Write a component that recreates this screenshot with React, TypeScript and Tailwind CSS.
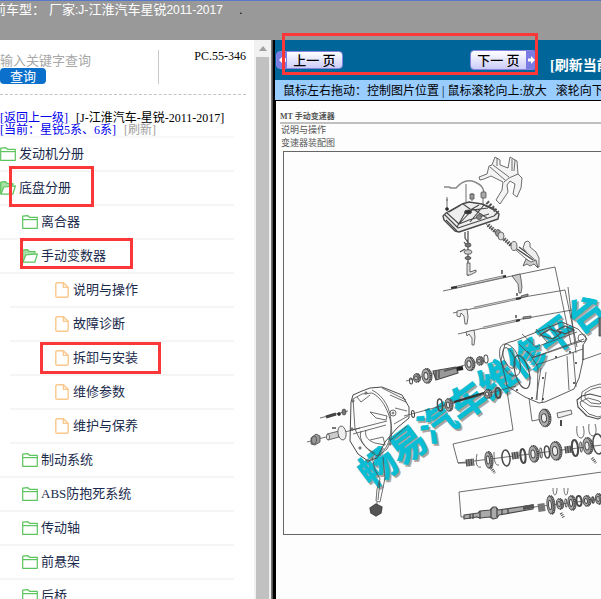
import React from 'react';

type IconKind = 'folder' | 'open' | 'page';

type Node = {
  label: string;
  icon: IconKind;
  mark?: string;
  children?: Node[];
};

const tree: Node[] = [
  { label: '发动机分册', icon: 'folder' },
  {
    label: '底盘分册',
    icon: 'open',
    mark: 'left-[9px] w-[85px] -top-[6px] h-[41px]',
    children: [
      { label: '离合器', icon: 'folder' },
      {
        label: '手动变数器',
        icon: 'open',
        mark: 'left-5 w-[113px] -top-[2px] h-[31px]',
        children: [
          { label: '说明与操作', icon: 'page' },
          { label: '故障诊断', icon: 'page' },
          { label: '拆卸与安装', icon: 'page', mark: 'left-[30px] w-[121px] top-0 h-8' },
          { label: '维修参数', icon: 'page' },
          { label: '维护与保养', icon: 'page' },
        ],
      },
      { label: '制动系统', icon: 'folder' },
      { label: 'ABS防抱死系统', icon: 'folder' },
      { label: '传动轴', icon: 'folder' },
      { label: '前悬架', icon: 'folder' },
      { label: '后桥', icon: 'folder' },
    ],
  },
];

function TreeIcon({ kind }: { kind: IconKind }) {
  if (kind === 'page') {
    return (
      <svg width="14" height="16" viewBox="0 0 14 16" fill="none" stroke="#fbc88c" strokeWidth="1.4" className="mr-1 shrink-0">
        <path d="M2 .8h6.4L13.2 5.400V14a1.200 1.200 0 0 1-1.200 1.200H2A1.200 1.200 0 0 1 .8 14V2A1.200 1.200 0 0 1 2 .8z" />
        <path d="M8.400 1v4.400h4.600" />
      </svg>
    );
  }
  if (kind === 'open') {
    return (
      <svg width="16" height="14" viewBox="0 0 16 14" fill="none" stroke="#5cc45c" strokeWidth="1.2" strokeLinejoin="round" className="mr-[3px] shrink-0">
        <path d="M.7 13V1.200L5.500.7 7.200 2.500H13v2.300" fill="#a5e0a5" />
        <path d="M.9 13.200L3.800 6l11.600-1.200-2.600 8.400z" fill="#fff" />
      </svg>
    );
  }
  return (
    <svg width="16" height="14" viewBox="0 0 16 14" fill="none" stroke="#5cc45c" strokeWidth="1.2" strokeLinejoin="round" className="mr-[3px] shrink-0">
      <path d="M.7 1.200L5.800.7l1.700 1.600h7.800v11H.7z" />
      <path d="M.7 4.600h14.600" />
    </svg>
  );
}

function Branch({ nodes, level }: { nodes: Node[]; level: number }) {
  const indent = level === 0 ? '' : level === 1 ? 'pl-[22px]' : 'pl-[45px]';
  return (
    <ul className={level === 2 ? 'ml-[10px]' : ''}>
      {nodes.map((n) => (
        <li key={n.label}>
          <div className="relative border-b-2 border-[#f5f5f5]">
            <a href="#" className={`flex h-8 items-center text-[13px] text-[#1b2b4d] ${indent}`}>
              <TreeIcon kind={n.icon} />
              {n.label}
            </a>
            {n.mark && <span className={`pointer-events-none absolute z-10 border-[3px] border-[#fb3737] ${n.mark}`} />}
          </div>
          {n.children && <Branch nodes={n.children} level={level + 1} />}
        </li>
      ))}
    </ul>
  );
}

function Gear({ x, y, rx, ry, teeth = true }: { x: number; y: number; rx: number; ry: number; teeth?: boolean }) {
  return (
    <g transform={`rotate(-6 ${x} ${y})`}>
      <ellipse cx={x + 2} cy={y} rx={rx} ry={ry} fill="#bbb" />
      {teeth && <ellipse cx={x + 1} cy={y} rx={rx} ry={ry} stroke="#444" strokeWidth="2" strokeDasharray="1 .8" />}
      <ellipse cx={x} cy={y} rx={rx} ry={ry} fill="#aaa" />
      <ellipse cx={x} cy={y} rx={rx * 0.5} ry={ry * 0.5} fill="#eee" strokeWidth="1" />
    </g>
  );
}

function Ring({ x, y, rx, ry, w = 1 }: { x: number; y: number; rx: number; ry: number; w?: number }) {
  return <ellipse cx={x} cy={y} rx={rx} ry={ry} strokeWidth={w} transform={`rotate(-6 ${x} ${y})`} />;
}

function GearboxDrawing() {
  return (
    <svg width="318" height="382" viewBox="284 152 318 382" className="block max-w-none" role="img" aria-label="变速器装配图">
      <g fontFamily="'Noto Sans CJK SC', sans-serif" fontWeight="700" fontSize="37">
        <text x="373" y="491" fill="#a9a39d" stroke="#a9a39d" strokeWidth=".6" transform="rotate(-36.500 373 491)">畅易汽车维修平台</text>
        <text x="371" y="489" fill="#08bdd4" stroke="#08bdd4" strokeWidth=".6" transform="rotate(-36.500 371 489)">畅易汽车维修平台</text>
      </g>
      <g fill="none" stroke="#4a4a4a" strokeWidth=".8" strokeLinejoin="round">
        {/* shift bracket */}
        <path d="M495 157l5 3v5l8 3 2-11 7 4 1 13 4 4-1 10-4 9-4-3 2-10-5-3-3 4 1 7-8 12-4-4 6-10 1-8-12-6-7 3-4 1-1-3 8-3 2-8 3-1z" fill="#f4f4f4" />
        <path d="M490 167l15 13M493 165l16 12M497 158v8M512 159v12M518 174l-9 4-5 4M515 160l-1 11" />
        {/* breather pipe */}
        <path d="M444 187h5l2 1h5c5-6 12-9 19-6 6 3 8 5 9 10" stroke="#888" strokeWidth="1.500" />
        <path d="M466 184v18M447 197v12M446 200h2M472 193v8M483 192v12" />
        <rect x="470" y="194" width="4" height="5" fill="#999" />
        <rect x="481" y="192" width="5" height="6" rx="1" fill="#aaa" />
        <circle cx="447" cy="209" r="1.500" fill="#222" />
        {/* top cover */}
        <path d="M443 216l3-3 16-9 7-2 13 2 12 5 5 5-1 5-39 13-4-1-11-11z" fill="#eee" strokeWidth="1.400" />
        <path d="M445 215l13 13 36-12 4-4M447 213l12 11 10-4 20-6M463 204l7 5 9 1M457 227l8-14 14-8M449 212l12-7M470 222l14-17M473 209l14 9M459 224l13-14 16-2M446 220l11 11M484 205l10 5" strokeWidth="1.100" />
        <ellipse cx="468" cy="212" rx="3.500" ry="2" fill="#333" />
        <ellipse cx="479" cy="217" rx="2.500" ry="2.500" fill="#888" />
        <path d="M487 202l11 11" strokeWidth="4" strokeDasharray="2 1.500" stroke="#555" />
        {/* selector parts below cover */}
        <path d="M465 232v6l4 6-2 2-3-4M468 231v45M460 252l5-3" strokeWidth="1.200" />
        <ellipse cx="468" cy="245" rx="3" ry="2" fill="#777" />
        <ellipse cx="468" cy="252" rx="4" ry="2.300" fill="#ccc" />
        <ellipse cx="468" cy="258" rx="3" ry="1.500" fill="#777" />
        <path d="M467 263v12h3l6-3v-2l-6 2v-9z" fill="#ddd" />
        {/* lock pin stack */}
        <path d="M486 224l46 40" />
        <path d="M488 225l8 7M504 239l7 6" stroke="#555" strokeWidth="4" strokeDasharray="1.500 1" />
        <ellipse cx="498" cy="233" rx="2.500" ry="3.500" fill="#999" />
        <ellipse cx="501" cy="236" rx="3" ry="4" fill="#ddd" />
        <ellipse cx="514" cy="246" rx="3" ry="4.500" fill="#ddd" />
        <path d="M517 249l16 11M519 247l15 11" strokeWidth="1.400" />
        <path d="M524 245l1-3 3-1 2 2v4l6 5 3 6v9l-3-1-2-7-7-6-4-5z" fill="#eee" />
        <path d="M523 266l3-7 5 3 5-2 2 8-4-4-4 2-3-2z" fill="#ccc" />
        {/* selector rails */}
        <path d="M443 291l78-17 34-7 16 77M453 313l71-16 41-7 12 57M458 334l64-15 50-9M568 287l8 66" />
        <path d="M452 288l54-12M474 308l46-10M483 328l36-8" stroke="#777" strokeWidth="2.400" />
        <path d="M452 288l54-12M474 308l46-10M483 328l36-8" stroke="#ddd" strokeWidth=".8" />
        <path d="M451 288l6-1M503 277l3-1M516 299l5-1M516 321l4-1" stroke="#333" strokeWidth="2" />
        <path d="M502 270v4M517 293v3M516 315v3" stroke="#333" strokeWidth="1.300" />
        <path d="M512 276l8-2 1 5 1 8-1 6h-2l-1-9-3-4z" fill="#ccc" />
        <path d="M457 311l10-2 1 8-1 7h-2l-1-8-3-3-1 4-3-1z" fill="#eee" />
        <path d="M466 332l8-2 1 7-1 8h-2v-7l-3-4-2 2z" fill="#eee" />
        <path d="M521 298l7-2v-2l-7 2zM523 319l8-1v-2l-8 1z" fill="#999" />
        {/* input shaft */}
        <path d="M406 381l74-20" />
        <Ring x={411} y={381} rx={1.5} ry={3} />
        <Gear x={416} y={378} rx={2.5} ry={4} />
        <Gear x={426} y={376} rx={4} ry={7} />
        <path d="M433 371l3 9 22-7-2-6z" fill="#999" strokeWidth="1.200" />
        <path d="M436 370v10M439 370v8M444 371l12-3" stroke="#555" strokeWidth="1.500" />
        <path d="M457 369l6-1" strokeWidth="4" stroke="#222" />
        <Gear x={469} y={364} rx={4} ry={6.5} />
        <Gear x={479} y={361} rx={2.5} ry={4} />
        <Ring x={486} y={359} rx={2} ry={4} />
        {/* gearbox case */}
        <path d="M514 341l48-19 16 7 9 10-4 6v15l-4 18-5 11-29 13-6 1-14-6-18-11-6-26 4-16 5-2z" strokeWidth=".9" />
        <path d="M527 351l7 6 50-18M532 358l50-17M536 365l47-16M519 344l12 12 7 11-1 33M546 372l-4 30M541 368l-5 32M583 345v15M522 334l14 13 41-15M536 329l11 13M548 325l12 13M573 352l3 35M567 356l2 34" strokeWidth=".8" />
        <ellipse cx="510" cy="360" rx="9" ry="17" transform="rotate(-22 510 360)" />
        <ellipse cx="522" cy="372" rx="7" ry="17" transform="rotate(-15 522 372)" strokeWidth="1.100" />
        <ellipse cx="509" cy="358" rx="5" ry="11" transform="rotate(-22 509 358)" />
        <ellipse cx="582" cy="338" rx="4" ry="4" />
        <path d="M540 335l10-6 11 4-8 6zM557 330l8-4 9 4-9 4z" strokeWidth="1.100" />
        <g fill="#333" stroke="none">
          <circle cx="517" cy="390" r="1" /><circle cx="532" cy="398" r="1" /><circle cx="543" cy="378" r="1" />
          <circle cx="543" cy="399" r="1" /><circle cx="576" cy="363" r="1" /><circle cx="574" cy="383" r="1" />
          <circle cx="556" cy="357" r="1" /><circle cx="570" cy="352" r="1" />
        </g>
        {/* layshaft */}
        <path d="M404 416l112-30" />
        <path d="M454 402l33-10" stroke="#333" strokeWidth="2" />
        <Ring x={413} y={414} rx={1.5} ry={3.5} />
        <Ring x={440} y={405} rx={2.5} ry={6} w={1.5} />
        <Gear x={448} y={405} rx={3} ry={6} />
        <Gear x={487} y={394} rx={3} ry={4} />
        <Ring x={498} y={393} rx={2.5} ry={5} w={2} />
        {/* clutch housing */}
        <path d="M351 402l2-7 9-4 8-3 12-1 20 8 7 12v11l-12 10-12 14-8 16-9 3-10-7-8-13z" strokeWidth="1" />
        <path d="M353 399l9-5 10-1c9 4 15 15 18 26s2 21-3 30l-9 7c-9-3-18-14-23-27z" />
        <path d="M357 397l4 5 4-3 5-4M372 390c12 6 19 19 19 34 0 12-2 20-7 26M382 388l24 12M390 395l16 7M395 408l12 3M391 440l16-14M394 424l14-8" strokeWidth=".8" />
        <path d="M361 431c-3 8 4 18 14 22M366 430c-2 7 3 11 9 13l10 2-2-8-13 3" />
        <path d="M370 412l17 4-1 4-10-2zM352 430l35-9M353 434l33-9" />
        <circle cx="393" cy="413" r="3" /><circle cx="393" cy="413" r="1" />
        <g fill="#999" strokeWidth=".6">
          <circle cx="353" cy="401" r="1.200" /><circle cx="366" cy="393" r="1.200" /><circle cx="352" cy="429" r="1.200" />
          <circle cx="360" cy="448" r="1.200" /><circle cx="368" cy="461" r="1.200" /><circle cx="390" cy="444" r="1.200" />
        </g>
        {/* release shaft and bolt */}
        <path d="M307 442l53-14M320 418l28-7" />
        <path d="M326 417l10-3" strokeWidth="3" stroke="#444" />
        <circle cx="339" cy="414" r="1.500" fill="#222" />
        <ellipse cx="344" cy="412" rx="2" ry="3" fill="#777" />
        <path d="M311 438l5-4 4 2v6l-5 3-4-1z" fill="#999" />
        <ellipse cx="314" cy="440" rx="2.500" ry="4" />
        <path d="M327 434l12-3v6l-11 3z" fill="#ccc" />
        <ellipse cx="328" cy="437" rx="1.500" ry="3" fill="#eee" />
        <ellipse cx="342" cy="433" rx="4" ry="7" fill="#eee" transform="rotate(-10 342 433)" />
        <path d="M332 428h4" strokeWidth="1.500" />
        {/* release fork */}
        <path d="M372 457l3 13 5 9-3 10-1 12 4 1 3-14 2-10-2-21" />
        <path d="M380 481l-2 19M377 502v6" />
        <path d="M370 508l6-4 6 3-1 6-5 3-5-3z" fill="#555" strokeWidth="1.300" />
        {/* leader lines */}
        <path d="M507 391l6 39-60 14 5 19h8M529 398l3 23 10-2M602 472l-143 20 2 25h6M582 360l20-7" />
        {/* reverse idler */}
        <Gear x={544} y={418} rx={5} ry={8.5} />
        <path d="M557 413l14-3 1 4-14 4z" fill="#eee" />
        <path d="M561 420v6" strokeWidth="2" />
        {/* gaskets */}
        <path d="M582 392l8-5 10-3 8 3v12l-6 8-12-1-9-6z" />
        <path d="M585 393l7-4 8-2 5 3v8l-5 6-9-1-6-5z" />
        <path d="M577 400l5-4 8-2 12 3 4 5v13l-8 4-11-3-9-9z" strokeWidth="1.100" />
        <path d="M580 402l8-4 11 3 5 5v9l-6 2-9-3-8-8z" />
        <path d="M599 318h4v18h-4z" fill="#777" />
        {/* main shaft gears */}
        <path d="M458 463l144-18" />
        <path d="M466 463l8-1M512 456l7-1M565 450l7-1" stroke="#888" strokeWidth="7" />
        <path d="M466 463l8-1M512 456l7-1M565 450l7-1" stroke="#444" strokeWidth="7" strokeDasharray="1 1.500" />
        <path d="M477 454c-2 10 0 14 4 13M494 452c0 8 1 14 5 13M577 426c-1 8 1 12 4 12s4-6 2-12M589 424c-1 8 1 12 4 12s4-6 2-12" />
        <Gear x={488} y={460} rx={3} ry={8} />
        <Ring x={506} y={458} rx={4} ry={8} w={1.5} />
        <Ring x={523} y={456} rx={2.5} ry={7} w={2} />
        <Gear x={533} y={454} rx={4} ry={8} />
        <Ring x={541} y={453} rx={1} ry={5} />
        <Ring x={547} y={452} rx={2.5} ry={6} w={1.5} />
        <Gear x={555} y={451} rx={5} ry={9} />
        <Ring x={575} y={448} rx={3} ry={8} w={2} />
        <Ring x={581} y={447} rx={1} ry={5} />
        <Gear x={587} y={446} rx={4} ry={8} />
        <Ring x={598} y={444} rx={5} ry={10} w={1.5} />
        <path d="M491 468l4 5M592 458l4 5M561 513l3 5" strokeWidth="3" strokeDasharray="1 1" />
        {/* output shaft */}
        <path d="M464 515l14-2 2-2 10-1 3-3h3l2 3 35-5v4l-34 6-2 3-4 1-3-2-10 1-3-1-13 2z" fill="#aaa" strokeWidth="1.200" />
        <path d="M470 514v5M473 514v5M480 511v8M491 509v9M497 508v9M502 509v6M508 509v5" strokeWidth="1.300" />
        <path d="M523 508l11-2" strokeWidth="4" stroke="#555" />
        <path d="M534 507l68-8" />
        <path d="M538 508l7-1" stroke="#777" strokeWidth="8" />
        <Gear x={550} y={505} rx={3} ry={9} />
        <Gear x={559} y={504} rx={2.5} ry={5} />
        <Ring x={566} y={503} rx={1} ry={4} />
        <Gear x={571} y={503} rx={3} ry={7} />
        <Ring x={579} y={501} rx={2.5} ry={5} w={2} />
        <Gear x={586} y={501} rx={3} ry={5} />
        <Ring x={593} y={500} rx={1} ry={3} w={1.5} />
        <Gear x={598} y={499} rx={2.5} ry={5} />
        <path d="M553 488c0 5 1 7 2 7s2-3 2-7M564 488c0 5 1 7 2 7s2-3 2-7" />
      </g>
    </svg>
  );
}

function Sidebar() {
  return (
    <aside className="w-[254px] shrink-0 overflow-hidden bg-white pt-[10px]">
      <div className="mr-2 flex items-start justify-between border-b border-dashed border-[#c4c4c4] pb-[10px]">
        <form className="flex w-[159px] flex-col items-start border-r border-[#c8c8c8]">
          <input
            type="text"
            aria-label="关键字"
            placeholder="输入关键字查询"
            className="h-[18px] w-full pt-1 text-[13px] leading-none outline-none placeholder:text-[#a8a8a8]"
          />
          <button type="button" className="flex h-4 w-[46px] items-center justify-center rounded bg-[#0a70cc] text-[13px] leading-none text-white">
            查询
          </button>
        </form>
        <span className="text-xs leading-3 text-black">PC.55-346</span>
      </div>
      <nav className="mr-5 border-b-2 border-[#f7f7f7] pt-[17px] text-xs leading-3 whitespace-nowrap">
        <div className="flex gap-2 text-black">
          <a href="#" className="text-[#0000ee]">[返回上一级]</a>
          <span>[J-江淮汽车-星锐-2011-2017]</span>
        </div>
        <div className="flex gap-2">
          <a href="#" className="text-[#0000ee]">[当前：星锐5系、6系]</a>
          <a href="#" className="text-[#a0a0a0]">[刷新]</a>
        </div>
      </nav>
      <div className="mr-5">
        <Branch nodes={tree} level={0} />
      </div>
    </aside>
  );
}

function Viewer() {
  return (
    <main className="flex min-w-0 flex-1 flex-col">
      <div className="relative flex h-10 shrink-0 items-center bg-[#006699] pl-px whitespace-nowrap">
        <button type="button" className="flex h-[18px] w-[67px] shrink-0 items-center rounded-sm border border-[#8585e0] bg-linear-to-b from-white to-[#ccccf8] text-[13px] leading-none font-medium text-black">
          <span className="flex h-full w-[10px] items-center justify-center bg-[#7b7be4]">
            <svg width="7" height="8" viewBox="0 0 7 8" fill="#fff"><path d="M0 4l4-4 3 2.500v3L4 8z" /></svg>
          </span>
          <span className="flex-1">上一 页</span>
        </button>
        <button type="button" className="ml-[127px] flex h-5 w-[67px] shrink-0 items-center rounded-sm border border-[#8585e0] bg-linear-to-b from-white to-[#ccccf8] text-[13px] leading-none font-medium text-black">
          <span className="flex-1">下一 页</span>
          <span className="flex h-full w-[10px] items-center justify-center bg-[#7b7be4]">
            <svg width="7" height="8" viewBox="0 0 7 8" fill="#fff"><path d="M7 4L3 0v2.500H0v3h3V8z" /></svg>
          </span>
        </button>
        <a href="#" className="mt-3 ml-[13px] text-sm leading-none font-bold text-white">[刷新当前页]</a>
        <span className="pointer-events-none absolute -top-[7px] left-[7px] z-10 h-[42px] w-64 border-[3px] border-[#fb3737]" />
      </div>
      <p className="flex h-5 shrink-0 items-center overflow-hidden bg-[#99ccff] pt-px pl-2 text-xs whitespace-pre text-black">
        鼠标左右拖动：控制图片位置 | 鼠标滚轮向上:放大{'   '}滚轮向下:缩小
      </p>
      <div className="flex-1 overflow-hidden border-t border-l border-black bg-[#fdfdfd] pt-[10px] pl-1 whitespace-nowrap text-[#555]">
        <h1 className="border-b-2 border-[#c0c0c0] text-[8px] leading-[11px] font-bold">MT 手动变速器</h1>
        <p className="pl-px text-[9px] leading-[13px]">说明与操作</p>
        <p className="pl-px text-[9px] leading-[13px]">变速器装配图</p>
        <div className="mt-px ml-[3px] overflow-hidden border-y border-l border-[#666]">
          <GearboxDrawing />
        </div>
      </div>
    </main>
  );
}

export default function App() {
  return (
    <div className="flex h-screen flex-col overflow-hidden bg-white font-['Liberation_Serif','Noto_Sans_CJK_SC',serif]">
      <header className="h-10 shrink-0 overflow-hidden border-t border-[#5577cc] bg-[#999999] pt-px font-['Liberation_Sans','Noto_Sans_CJK_SC',sans-serif] text-[13px] leading-4 whitespace-pre text-white">
        <div className="-ml-5 flex items-baseline">
          <span>当前车型：</span>
          <span className="ml-1">厂家</span>
          <span className="text-xs">:J-</span>
          <span>江淮汽车星锐</span>
          <span className="text-xs">2011-2017</span>
          <span className="ml-4 text-black">.</span>
        </div>
      </header>
      <div className="flex min-h-0 flex-1">
        <Sidebar />
        <div className="flex w-[17px] shrink-0 flex-col items-center bg-[#f1f1f1]">
          <span className="flex h-[17px] items-center">
            <svg width="8" height="5" viewBox="0 0 8 5" fill="#a0a0a0"><path d="M0 5l4-5 4 5z" /></svg>
          </span>
          <span className="w-[13px] flex-1 bg-[#c1c1c1]" />
        </div>
        <div className="w-1 shrink-0 border-r-2 border-l border-r-black border-l-[#777] bg-[#555]" />
        <Viewer />
      </div>
    </div>
  );
}
